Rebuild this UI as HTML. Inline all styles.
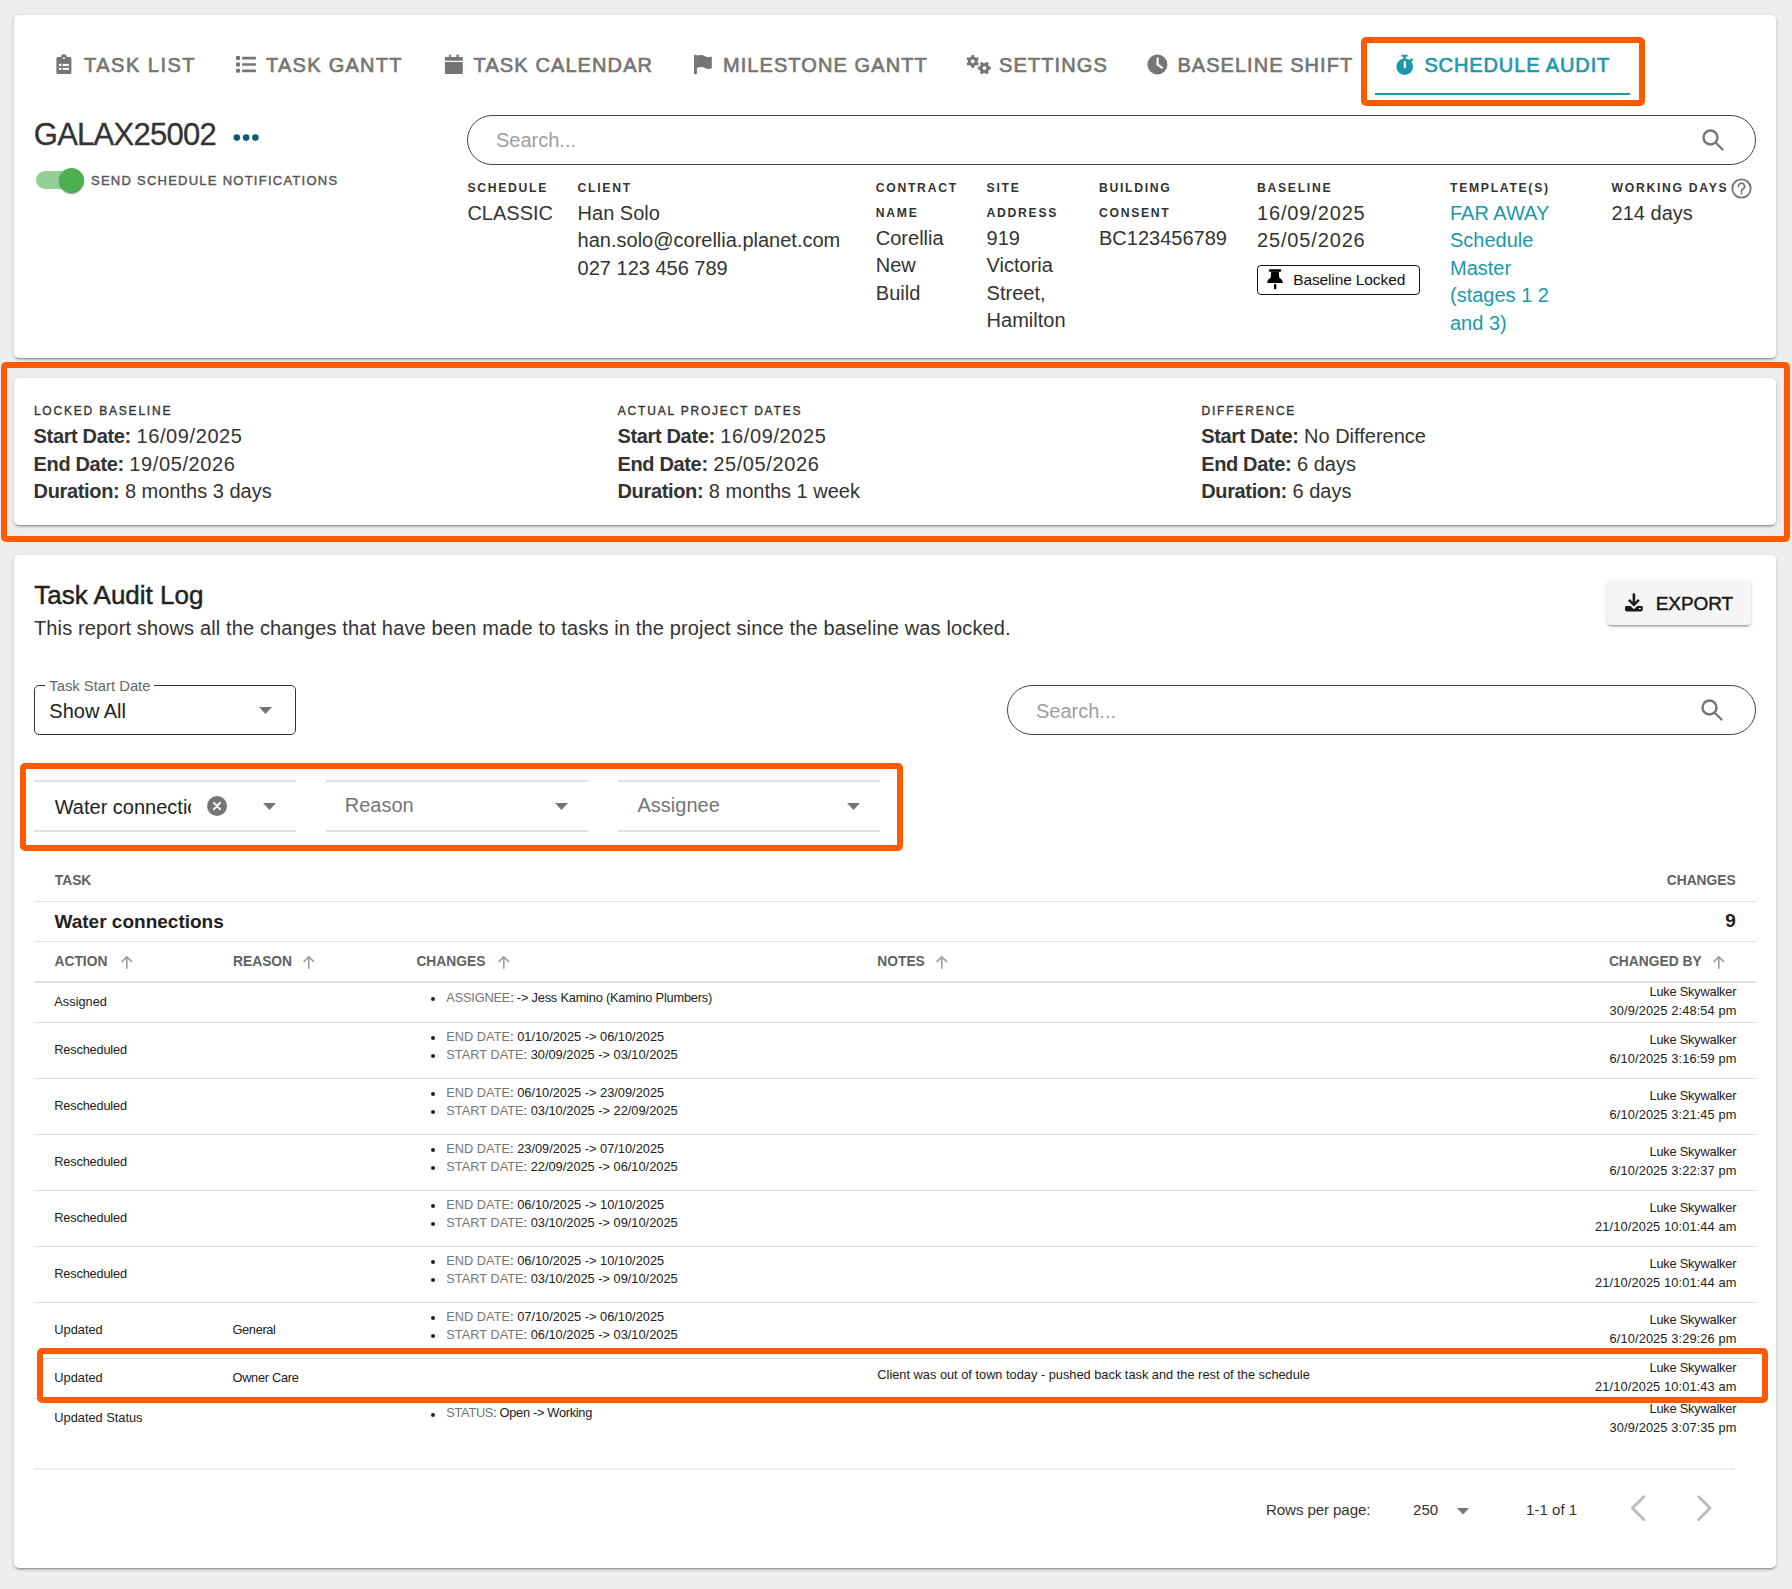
<!DOCTYPE html>
<html><head><meta charset="utf-8"><title>Schedule Audit</title>
<style>
html,body{margin:0;padding:0;}
body{width:1792px;height:1589px;background:#eeeeee;position:relative;overflow:hidden;font-family:"Liberation Sans",sans-serif;}
.t{position:absolute;white-space:nowrap;line-height:1;}
svg{display:block}
</style></head><body>
<div style="position:absolute;left:14px;top:15px;width:1762px;height:343px;background:#fff;border-radius:5px;box-shadow:0px 3px 1px -2px rgba(0,0,0,0.2),0px 2px 2px 0px rgba(0,0,0,0.14),0px 1px 5px 0px rgba(0,0,0,0.12);"></div>
<div style="position:absolute;left:14px;top:378px;width:1762px;height:147px;background:#fff;border-radius:5px;box-shadow:0px 3px 1px -2px rgba(0,0,0,0.2),0px 2px 2px 0px rgba(0,0,0,0.14),0px 1px 5px 0px rgba(0,0,0,0.12);"></div>
<div style="position:absolute;left:14px;top:555px;width:1762px;height:1013px;background:#fff;border-radius:5px;box-shadow:0px 3px 1px -2px rgba(0,0,0,0.2),0px 2px 2px 0px rgba(0,0,0,0.14),0px 1px 5px 0px rgba(0,0,0,0.12);"></div>
<div class="t" style="left:84.0px;top:55.37px;font-size:20px;font-weight:400;color:#757575;letter-spacing:1.5px;-webkit-text-stroke:0.65px #757575;">TASK LIST</div>
<div class="t" style="left:266.0px;top:55.37px;font-size:20px;font-weight:400;color:#757575;letter-spacing:1.27px;-webkit-text-stroke:0.65px #757575;">TASK GANTT</div>
<div class="t" style="left:473.59999999999997px;top:55.37px;font-size:20px;font-weight:400;color:#757575;letter-spacing:1.1px;-webkit-text-stroke:0.65px #757575;">TASK CALENDAR</div>
<div class="t" style="left:722.9px;top:55.37px;font-size:20px;font-weight:400;color:#757575;letter-spacing:1.09px;-webkit-text-stroke:0.65px #757575;">MILESTONE GANTT</div>
<div class="t" style="left:999.0px;top:55.37px;font-size:20px;font-weight:400;color:#757575;letter-spacing:1.11px;-webkit-text-stroke:0.65px #757575;">SETTINGS</div>
<div class="t" style="left:1177.4px;top:55.37px;font-size:20px;font-weight:400;color:#757575;letter-spacing:1.05px;-webkit-text-stroke:0.65px #757575;">BASELINE SHIFT</div>
<div class="t" style="left:1424.4px;top:55.37px;font-size:20px;font-weight:400;color:#1c97ad;letter-spacing:0.89px;-webkit-text-stroke:0.65px #1c97ad;">SCHEDULE AUDIT</div>
<div style="position:absolute;left:1375px;top:93px;width:255px;height:2px;background:#1c97ad;"></div>
<svg style="position:absolute;left:56px;top:54px" width="17" height="21" viewBox="0 0 17 21"><path fill="#757575" d="M1.9,3 H13.9 a1.5,1.5 0 0 1 1.5,1.5 V18.6 a1.5,1.5 0 0 1 -1.5,1.5 H1.9 a1.5,1.5 0 0 1 -1.5,-1.5 V4.5 a1.5,1.5 0 0 1 1.5,-1.5z"/><circle cx="7.9" cy="3" r="2.8" fill="#757575"/><circle cx="7.9" cy="4.3" r="1.05" fill="#fff"/><rect x="3" y="9.9" width="2.4" height="2.1" fill="#fff"/><rect x="6.7" y="9.9" width="6.2" height="2.1" fill="#fff"/><rect x="3" y="13.8" width="2.4" height="2.1" fill="#fff"/><rect x="6.7" y="13.8" width="6.2" height="2.1" fill="#fff"/></svg>
<svg style="position:absolute;left:236px;top:55px" width="21" height="19" viewBox="0 0 21 19"><g fill="#757575"><rect x="0" y="1" width="4" height="4" rx="0.8"/><rect x="0" y="7.4" width="4" height="4" rx="0.8"/><rect x="0" y="13.8" width="4" height="4" rx="0.8"/><rect x="6" y="1.8" width="14" height="2.6" rx="1"/><rect x="6" y="8.2" width="14" height="2.6" rx="1"/><rect x="6" y="14.6" width="14" height="2.6" rx="1"/></g></svg>
<svg style="position:absolute;left:444px;top:54px" width="20" height="21" viewBox="0 0 20 21"><g fill="#757575"><rect x="4.9" y="0.5" width="2" height="3" rx="0.8"/><rect x="12.5" y="0.5" width="2.3" height="3" rx="0.8"/><path d="M1.7,3 H18 a0.8,0.8 0 0 1 0.8,0.8 v3 h-17.9 v-3 a0.8,0.8 0 0 1 0.8,-0.8z"/><path d="M0.9,8 H18.8 V19.3 a0.8,0.8 0 0 1 -0.8,0.8 H1.7 a0.8,0.8 0 0 1 -0.8,-0.8z"/></g></svg>
<svg style="position:absolute;left:694px;top:54px" width="19" height="21" viewBox="0 0 19 21"><g fill="#757575"><rect x="0" y="0.8" width="2.9" height="19.4" rx="1"/><path d="M2.5,1.8 C6,0.6 8.5,1 11,2.3 C13.5,3.5 15.5,3.4 17.8,2.6 V14.2 C15.5,15.2 13.5,15.3 11,14 C8.5,12.8 6,12.5 2.5,14.2z"/></g></svg>
<svg style="position:absolute;left:962px;top:50px" width="32" height="28" viewBox="0 0 32 28"><circle cx="10.7" cy="11.4" r="5.0" fill="#757575"/><rect x="9.35" y="4.9" width="2.7" height="2.7" rx="0.4" fill="#757575" transform="rotate(0.0 10.7 11.4)"/><rect x="9.35" y="4.9" width="2.7" height="2.7" rx="0.4" fill="#757575" transform="rotate(60.0 10.7 11.4)"/><rect x="9.35" y="4.9" width="2.7" height="2.7" rx="0.4" fill="#757575" transform="rotate(120.0 10.7 11.4)"/><rect x="9.35" y="4.9" width="2.7" height="2.7" rx="0.4" fill="#757575" transform="rotate(180.0 10.7 11.4)"/><rect x="9.35" y="4.9" width="2.7" height="2.7" rx="0.4" fill="#757575" transform="rotate(240.0 10.7 11.4)"/><rect x="9.35" y="4.9" width="2.7" height="2.7" rx="0.4" fill="#757575" transform="rotate(300.0 10.7 11.4)"/><circle cx="10.7" cy="11.4" r="1.9" fill="#fff"/><circle cx="22.4" cy="18.1" r="5.1" fill="#757575"/><rect x="21.049999999999997" y="11.500000000000002" width="2.7" height="2.7" rx="0.4" fill="#757575" transform="rotate(30.0 22.4 18.1)"/><rect x="21.049999999999997" y="11.500000000000002" width="2.7" height="2.7" rx="0.4" fill="#757575" transform="rotate(90.0 22.4 18.1)"/><rect x="21.049999999999997" y="11.500000000000002" width="2.7" height="2.7" rx="0.4" fill="#757575" transform="rotate(150.0 22.4 18.1)"/><rect x="21.049999999999997" y="11.500000000000002" width="2.7" height="2.7" rx="0.4" fill="#757575" transform="rotate(210.0 22.4 18.1)"/><rect x="21.049999999999997" y="11.500000000000002" width="2.7" height="2.7" rx="0.4" fill="#757575" transform="rotate(270.0 22.4 18.1)"/><rect x="21.049999999999997" y="11.500000000000002" width="2.7" height="2.7" rx="0.4" fill="#757575" transform="rotate(330.0 22.4 18.1)"/><circle cx="22.4" cy="18.1" r="1.9" fill="#fff"/></svg>
<svg style="position:absolute;left:1146px;top:53px" width="23" height="23" viewBox="0 0 23 23"><circle cx="11.4" cy="11.5" r="10" fill="#757575"/><path d="M11.6,5.3 V11.7 L16,14.6" stroke="#fff" stroke-width="2.1" fill="none" stroke-linecap="round" stroke-linejoin="round"/></svg>
<svg style="position:absolute;left:1395px;top:54px" width="20" height="22" viewBox="0 0 20 22"><g fill="#1c97ad"><rect x="6.4" y="0.8" width="6.4" height="2" rx="1"/><rect x="8.4" y="2" width="2.4" height="3"/><circle cx="9.7" cy="12.75" r="8.3"/><circle cx="16.6" cy="5.8" r="1.3"/><path d="M14,6.5 L16,4.4 L17.8,6.2 L15.8,8.3z"/></g><rect x="8.7" y="6.9" width="2.2" height="7.3" rx="1" fill="#fff"/></svg>
<div class="t" style="left:33.8px;top:118.75px;font-size:31px;font-weight:400;color:#333;letter-spacing:-0.75px;-webkit-text-stroke:0.3px #333;">GALAX25002</div>
<svg style="position:absolute;left:232px;top:133px" width="28" height="10" viewBox="0 0 28 10"><g fill="#125a70"><circle cx="4.8" cy="4.6" r="3.3"/><circle cx="14.1" cy="4.6" r="3.3"/><circle cx="23.4" cy="4.6" r="3.3"/></g></svg>
<div style="position:absolute;left:36px;top:171px;width:48px;height:18px;background:#93d096;border-radius:9px;"></div>
<div style="position:absolute;left:59px;top:168px;width:25px;height:25px;background:#4caf50;border-radius:50%;box-shadow:0px 2px 1px -1px rgba(0,0,0,0.2),0px 1px 1px 0px rgba(0,0,0,0.14),0px 1px 3px 0px rgba(0,0,0,0.12);"></div>
<div class="t" style="left:91px;top:174.19px;font-size:13px;font-weight:400;color:#555;letter-spacing:1.25px;-webkit-text-stroke:0.4px #555;">SEND SCHEDULE NOTIFICATIONS</div>
<div style="position:absolute;left:467px;top:115px;width:1287px;height:48px;border:1px solid #444;border-radius:25px;"></div>
<div class="t" style="left:496px;top:130.27px;font-size:20px;font-weight:400;color:#9e9e9e;">Search...</div>
<svg style="position:absolute;left:1701px;top:128.3px" width="25" height="25" viewBox="0 0 25 25"><circle cx="9.5" cy="9.5" r="7" stroke="#757575" stroke-width="2.4" fill="none"/><path d="M14.5,14.5 L21.5,21.5" stroke="#757575" stroke-width="2.3" stroke-linecap="round"/></svg>
<div class="t" style="left:467.4px;top:181.67px;font-size:12.2px;font-weight:700;color:#333;letter-spacing:1.7px;">SCHEDULE</div>
<div class="t" style="left:467.4px;top:202.77px;font-size:20px;font-weight:400;color:#333;">CLASSIC</div>
<div class="t" style="left:577.6px;top:181.67px;font-size:12.2px;font-weight:700;color:#333;letter-spacing:1.7px;">CLIENT</div>
<div class="t" style="left:577.6px;top:202.77px;font-size:20px;font-weight:400;color:#333;">Han Solo</div>
<div class="t" style="left:577.6px;top:230.27px;font-size:20px;font-weight:400;color:#333;">han.solo@corellia.planet.com</div>
<div class="t" style="left:577.6px;top:257.77px;font-size:20px;font-weight:400;color:#333;">027 123 456 789</div>
<div class="t" style="left:875.8px;top:181.67px;font-size:12.2px;font-weight:700;color:#333;letter-spacing:1.7px;">CONTRACT</div>
<div class="t" style="left:875.8px;top:206.87px;font-size:12.2px;font-weight:700;color:#333;letter-spacing:1.7px;">NAME</div>
<div class="t" style="left:875.8px;top:227.77px;font-size:20px;font-weight:400;color:#333;">Corellia</div>
<div class="t" style="left:875.8px;top:255.27px;font-size:20px;font-weight:400;color:#333;">New</div>
<div class="t" style="left:875.8px;top:282.77px;font-size:20px;font-weight:400;color:#333;">Build</div>
<div class="t" style="left:986.6px;top:181.67px;font-size:12.2px;font-weight:700;color:#333;letter-spacing:1.7px;">SITE</div>
<div class="t" style="left:986.6px;top:206.87px;font-size:12.2px;font-weight:700;color:#333;letter-spacing:1.7px;">ADDRESS</div>
<div class="t" style="left:986.6px;top:227.77px;font-size:20px;font-weight:400;color:#333;">919</div>
<div class="t" style="left:986.6px;top:255.27px;font-size:20px;font-weight:400;color:#333;">Victoria</div>
<div class="t" style="left:986.6px;top:282.77px;font-size:20px;font-weight:400;color:#333;">Street,</div>
<div class="t" style="left:986.6px;top:310.27px;font-size:20px;font-weight:400;color:#333;">Hamilton</div>
<div class="t" style="left:1099px;top:181.67px;font-size:12.2px;font-weight:700;color:#333;letter-spacing:1.7px;">BUILDING</div>
<div class="t" style="left:1099px;top:206.87px;font-size:12.2px;font-weight:700;color:#333;letter-spacing:1.7px;">CONSENT</div>
<div class="t" style="left:1099px;top:227.77px;font-size:20px;font-weight:400;color:#333;">BC123456789</div>
<div class="t" style="left:1257px;top:181.67px;font-size:12.2px;font-weight:700;color:#333;letter-spacing:1.7px;">BASELINE</div>
<div class="t" style="left:1257px;top:202.97px;font-size:20px;font-weight:400;color:#333;letter-spacing:0.85px;">16/09/2025</div>
<div class="t" style="left:1257px;top:230.47px;font-size:20px;font-weight:400;color:#333;letter-spacing:0.85px;">25/05/2026</div>
<div class="t" style="left:1450px;top:181.67px;font-size:12.2px;font-weight:700;color:#333;letter-spacing:1.7px;">TEMPLATE(S)</div>
<div class="t" style="left:1450px;top:202.77px;font-size:20px;font-weight:400;color:#1c97ad;">FAR AWAY</div>
<div class="t" style="left:1450px;top:230.27px;font-size:20px;font-weight:400;color:#1c97ad;">Schedule</div>
<div class="t" style="left:1450px;top:257.77px;font-size:20px;font-weight:400;color:#1c97ad;">Master</div>
<div class="t" style="left:1450px;top:285.27px;font-size:20px;font-weight:400;color:#1c97ad;">(stages 1 2</div>
<div class="t" style="left:1450px;top:312.77px;font-size:20px;font-weight:400;color:#1c97ad;">and 3)</div>
<div class="t" style="left:1611.6px;top:181.67px;font-size:12.2px;font-weight:700;color:#333;letter-spacing:1.7px;">WORKING DAYS</div>
<div class="t" style="left:1611.6px;top:202.77px;font-size:20px;font-weight:400;color:#333;">214 days</div>
<svg style="position:absolute;left:1731px;top:178px" width="21" height="21" viewBox="0 0 21 21"><circle cx="10.5" cy="10.5" r="9.2" stroke="#757575" stroke-width="1.8" fill="none"/><path d="M7.4,8.3 a3.1,3.1 0 1 1 4.6,2.7 c-1,0.55 -1.5,1.1 -1.5,2.1 v0.5" stroke="#757575" stroke-width="1.7" fill="none" stroke-linecap="round"/><circle cx="10.5" cy="15.6" r="1.05" fill="#757575"/></svg>
<div style="position:absolute;left:1257px;top:265px;width:161px;height:28px;border:1.3px solid #111;border-radius:4px;"></div>
<svg style="position:absolute;left:1266px;top:268px" width="18" height="23" viewBox="0 0 18 23"><g fill="#000"><rect x="2.8" y="1.2" width="12.4" height="2.5" rx="1.2"/><path d="M5.2,3.5 H12.8 L13.2,9.5 C15.5,11 16.5,12.5 16.8,14.2 Q17,15 16.2,15 H1.8 Q1,15 1.2,14.2 C1.5,12.5 2.5,11 4.8,9.5z"/><rect x="8" y="16" width="2.4" height="5.2" rx="1"/></g></svg>
<div class="t" style="left:1293.2px;top:271.88px;font-size:15.5px;font-weight:400;color:#111;letter-spacing:-0.12px;">Baseline Locked</div>
<div class="t" style="left:33.9px;top:404.74px;font-size:12px;font-weight:400;color:#333;letter-spacing:1.8px;-webkit-text-stroke:0.35px #333;">LOCKED BASELINE</div>
<div class="t" style="left:33.6px;top:426.37px;font-size:20px;font-weight:400;color:#333;"><b style="font-weight:700;letter-spacing:-0.35px">Start Date:</b> <span style="letter-spacing:0.6px">16/09/2025</span></div>
<div class="t" style="left:33.6px;top:453.72px;font-size:20px;font-weight:400;color:#333;"><b style="font-weight:700;letter-spacing:-0.35px">End Date:</b> <span style="letter-spacing:0.6px">19/05/2026</span></div>
<div class="t" style="left:33.6px;top:481.07px;font-size:20px;font-weight:400;color:#333;"><b style="font-weight:700;letter-spacing:-0.35px">Duration:</b> <span style="letter-spacing:0px">8 months 3 days</span></div>
<div class="t" style="left:617.8px;top:404.74px;font-size:12px;font-weight:400;color:#333;letter-spacing:1.8px;-webkit-text-stroke:0.35px #333;">ACTUAL PROJECT DATES</div>
<div class="t" style="left:617.5px;top:426.37px;font-size:20px;font-weight:400;color:#333;"><b style="font-weight:700;letter-spacing:-0.35px">Start Date:</b> <span style="letter-spacing:0.6px">16/09/2025</span></div>
<div class="t" style="left:617.5px;top:453.72px;font-size:20px;font-weight:400;color:#333;"><b style="font-weight:700;letter-spacing:-0.35px">End Date:</b> <span style="letter-spacing:0.6px">25/05/2026</span></div>
<div class="t" style="left:617.5px;top:481.07px;font-size:20px;font-weight:400;color:#333;"><b style="font-weight:700;letter-spacing:-0.35px">Duration:</b> <span style="letter-spacing:0px">8 months 1 week</span></div>
<div class="t" style="left:1201.5px;top:404.74px;font-size:12px;font-weight:400;color:#333;letter-spacing:1.8px;-webkit-text-stroke:0.35px #333;">DIFFERENCE</div>
<div class="t" style="left:1201.2px;top:426.37px;font-size:20px;font-weight:400;color:#333;"><b style="font-weight:700;letter-spacing:-0.35px">Start Date:</b> <span style="letter-spacing:0px">No Difference</span></div>
<div class="t" style="left:1201.2px;top:453.72px;font-size:20px;font-weight:400;color:#333;"><b style="font-weight:700;letter-spacing:-0.35px">End Date:</b> <span style="letter-spacing:0px">6 days</span></div>
<div class="t" style="left:1201.2px;top:481.07px;font-size:20px;font-weight:400;color:#333;"><b style="font-weight:700;letter-spacing:-0.35px">Duration:</b> <span style="letter-spacing:0px">6 days</span></div>
<div class="t" style="left:34.3px;top:581.99px;font-size:26px;font-weight:400;color:#222;-webkit-text-stroke:0.45px #222;">Task Audit Log</div>
<div class="t" style="left:34px;top:617.57px;font-size:20px;font-weight:400;color:#333;letter-spacing:0.14px;">This report shows all the changes that have been made to tasks in the project since the baseline was locked.</div>
<div style="position:absolute;left:1607px;top:581px;width:144px;height:44px;background:#f5f5f5;border-radius:4px;box-shadow:0px 3px 1px -2px rgba(0,0,0,0.2),0px 2px 2px 0px rgba(0,0,0,0.14),0px 1px 5px 0px rgba(0,0,0,0.12);"></div>
<svg style="position:absolute;left:1622px;top:590px" width="24" height="24" viewBox="0 0 24 24"><g fill="#1a1a1a"><rect x="10.6" y="3.2" width="2.6" height="12" rx="1.2"/><path d="M6,10.8 L7.8,9 L11.9,13.2 L16,9 L17.8,10.8 L11.9,16.6z"/><path d="M3,17.2 a1.2,1.2 0 0 1 1.2,-1.2 H8.5 L11.9,19.2 L15.3,16 H19.6 a1.2,1.2 0 0 1 1.2,1.2 V19.6 a1.8,1.8 0 0 1 -1.8,1.8 H4.8 a1.8,1.8 0 0 1 -1.8,-1.8z"/></g><rect x="16.8" y="18" width="2" height="1.2" fill="#f5f5f5"/></svg>
<div class="t" style="left:1655.8px;top:594.21px;font-size:19px;font-weight:400;color:#1a1a1a;letter-spacing:-0.1px;-webkit-text-stroke:0.45px #1a1a1a;">EXPORT</div>
<div style="position:absolute;left:34px;top:685px;width:260px;height:48px;border:1.3px solid #333;border-radius:5px;"></div>
<div style="position:absolute;left:45px;top:680px;width:109px;height:10px;background:#fff;"></div>
<div class="t" style="left:49.3px;top:679.27px;font-size:14.8px;font-weight:400;color:#666;">Task Start Date</div>
<div class="t" style="left:49.3px;top:701.07px;font-size:20px;font-weight:400;color:#222;">Show All</div>
<svg style="position:absolute;left:258px;top:706px" width="15" height="9" viewBox="0 0 15 9"><path d="M1,1 H14 L7.5,8z" fill="#757575"/></svg>
<div style="position:absolute;left:1007px;top:685px;width:747px;height:48px;border:1px solid #444;border-radius:25px;"></div>
<div class="t" style="left:1036px;top:700.57px;font-size:20px;font-weight:400;color:#9e9e9e;">Search...</div>
<svg style="position:absolute;left:1700px;top:698px" width="25" height="25" viewBox="0 0 25 25"><circle cx="9.5" cy="9.5" r="7" stroke="#757575" stroke-width="2.4" fill="none"/><path d="M14.5,14.5 L21.5,21.5" stroke="#757575" stroke-width="2.3" stroke-linecap="round"/></svg>
<div style="position:absolute;left:34px;top:779.5px;width:262px;height:2px;background:#e0e0e0;"></div>
<div style="position:absolute;left:34px;top:829.5px;width:262px;height:2px;background:#e0e0e0;"></div>
<svg style="position:absolute;left:262px;top:802px" width="15" height="9" viewBox="0 0 15 9"><path d="M1,1 H14 L7.5,8z" fill="#757575"/></svg>
<div style="position:absolute;left:326px;top:779.5px;width:262px;height:2px;background:#e0e0e0;"></div>
<div style="position:absolute;left:326px;top:829.5px;width:262px;height:2px;background:#e0e0e0;"></div>
<svg style="position:absolute;left:554px;top:802px" width="15" height="9" viewBox="0 0 15 9"><path d="M1,1 H14 L7.5,8z" fill="#757575"/></svg>
<div style="position:absolute;left:618px;top:779.5px;width:262px;height:2px;background:#e0e0e0;"></div>
<div style="position:absolute;left:618px;top:829.5px;width:262px;height:2px;background:#e0e0e0;"></div>
<svg style="position:absolute;left:846px;top:802px" width="15" height="9" viewBox="0 0 15 9"><path d="M1,1 H14 L7.5,8z" fill="#757575"/></svg>
<div style="position:absolute;left:54.7px;top:790px;width:136px;height:32px;overflow:hidden;">
<div class="t" style="left:0px;top:6.67px;font-size:20px;font-weight:400;color:#222;">Water connections</div>
</div>
<div class="t" style="left:344.8px;top:795.07px;font-size:20px;font-weight:400;color:#757575;">Reason</div>
<div class="t" style="left:637.5px;top:795.07px;font-size:20px;font-weight:400;color:#757575;">Assignee</div>
<svg style="position:absolute;left:206px;top:795px" width="22" height="22" viewBox="0 0 22 22"><circle cx="11" cy="11" r="10" fill="#757575"/><path d="M7.9,7.9 L14.1,14.1 M14.1,7.9 L7.9,14.1" stroke="#fff" stroke-width="2" stroke-linecap="round"/></svg>
<div class="t" style="left:54.8px;top:874.32px;font-size:13.8px;font-weight:700;color:#616161;">TASK</div>
<div class="t" style="right:56.299999999999955px;top:874.12px;font-size:13.8px;font-weight:700;color:#616161;">CHANGES</div>
<div style="position:absolute;left:34px;top:900.5px;width:1722px;height:1px;background:#e0e0e0;"></div>
<div class="t" style="left:54.5px;top:911.71px;font-size:19px;font-weight:700;color:#212121;">Water connections</div>
<div class="t" style="right:56.299999999999955px;top:911.31px;font-size:19px;font-weight:700;color:#212121;">9</div>
<div style="position:absolute;left:34px;top:941px;width:1722px;height:1px;background:#e0e0e0;"></div>
<div class="t" style="left:54.5px;top:954.82px;font-size:13.8px;font-weight:700;color:#616161;">ACTION</div>
<svg style="position:absolute;left:119.5px;top:954px" width="14" height="16" viewBox="0 0 14 16"><path d="M6.8,14.8 V3.2 M1.6,7.9 L6.8,2.9 L12,7.9" stroke="#9e9e9e" stroke-width="1.6" fill="none"/></svg>
<div class="t" style="left:233px;top:954.82px;font-size:13.8px;font-weight:700;color:#616161;">REASON</div>
<svg style="position:absolute;left:302px;top:954px" width="14" height="16" viewBox="0 0 14 16"><path d="M6.8,14.8 V3.2 M1.6,7.9 L6.8,2.9 L12,7.9" stroke="#9e9e9e" stroke-width="1.6" fill="none"/></svg>
<div class="t" style="left:416.4px;top:954.82px;font-size:13.8px;font-weight:700;color:#616161;">CHANGES</div>
<svg style="position:absolute;left:497px;top:954px" width="14" height="16" viewBox="0 0 14 16"><path d="M6.8,14.8 V3.2 M1.6,7.9 L6.8,2.9 L12,7.9" stroke="#9e9e9e" stroke-width="1.6" fill="none"/></svg>
<div class="t" style="left:877.3px;top:954.82px;font-size:13.8px;font-weight:700;color:#616161;">NOTES</div>
<svg style="position:absolute;left:935px;top:954px" width="14" height="16" viewBox="0 0 14 16"><path d="M6.8,14.8 V3.2 M1.6,7.9 L6.8,2.9 L12,7.9" stroke="#9e9e9e" stroke-width="1.6" fill="none"/></svg>
<div class="t" style="left:1608.9px;top:954.82px;font-size:13.8px;font-weight:700;color:#616161;">CHANGED BY</div>
<svg style="position:absolute;left:1712px;top:954px" width="14" height="16" viewBox="0 0 14 16"><path d="M6.8,14.8 V3.2 M1.6,7.9 L6.8,2.9 L12,7.9" stroke="#9e9e9e" stroke-width="1.6" fill="none"/></svg>
<div style="position:absolute;left:34px;top:981px;width:1722px;height:2px;background:#e0e0e0;"></div>
<div style="position:absolute;left:34px;top:1022px;width:1722px;height:1px;background:#e0e0e0;"></div>
<div style="position:absolute;left:34px;top:1078px;width:1722px;height:1px;background:#e0e0e0;"></div>
<div style="position:absolute;left:34px;top:1134px;width:1722px;height:1px;background:#e0e0e0;"></div>
<div style="position:absolute;left:34px;top:1190px;width:1722px;height:1px;background:#e0e0e0;"></div>
<div style="position:absolute;left:34px;top:1246px;width:1722px;height:1px;background:#e0e0e0;"></div>
<div style="position:absolute;left:34px;top:1302px;width:1722px;height:1px;background:#e0e0e0;"></div>
<div style="position:absolute;left:34px;top:1358px;width:1722px;height:1px;background:#e0e0e0;"></div>
<div style="position:absolute;left:34px;top:1398px;width:1722px;height:1px;background:#e0e0e0;"></div>
<div style="position:absolute;left:34px;top:1468px;width:1701px;height:2px;background:#eeeeee;"></div>
<div class="t" style="left:54.3px;top:995.86px;font-size:12.8px;font-weight:400;color:#212121;">Assigned</div>
<div style="position:absolute;left:431px;top:997.1px;width:4px;height:4px;background:#222;border-radius:50%;"></div>
<div class="t" style="left:446.3px;top:991.86px;font-size:12.8px;font-weight:400;color:#212121;letter-spacing:-0.2px;"><span style="color:#757575">ASSIGNEE</span>: -> Jess Kamino (Kamino Plumbers)</div>
<div class="t" style="right:55.700000000000045px;top:986.06px;font-size:12.8px;font-weight:400;color:#212121;letter-spacing:-0.2px;">Luke Skywalker</div>
<div class="t" style="right:55.5px;top:1005.06px;font-size:12.8px;font-weight:400;color:#212121;letter-spacing:0.12px;">30/9/2025 2:48:54 pm</div>
<div class="t" style="left:54.3px;top:1043.86px;font-size:12.8px;font-weight:400;color:#212121;letter-spacing:-0.2px;">Rescheduled</div>
<div style="position:absolute;left:431px;top:1036.1000000000001px;width:4px;height:4px;background:#222;border-radius:50%;"></div>
<div class="t" style="left:446.3px;top:1030.86px;font-size:12.8px;font-weight:400;color:#212121;"><span style="color:#757575">END DATE</span>: 01/10/2025 -> 06/10/2025</div>
<div style="position:absolute;left:431px;top:1054.1000000000001px;width:4px;height:4px;background:#222;border-radius:50%;"></div>
<div class="t" style="left:446.3px;top:1048.86px;font-size:12.8px;font-weight:400;color:#212121;"><span style="color:#757575">START DATE</span>: 30/09/2025 -> 03/10/2025</div>
<div class="t" style="right:55.700000000000045px;top:1034.06px;font-size:12.8px;font-weight:400;color:#212121;letter-spacing:-0.2px;">Luke Skywalker</div>
<div class="t" style="right:55.5px;top:1053.06px;font-size:12.8px;font-weight:400;color:#212121;letter-spacing:0.12px;">6/10/2025 3:16:59 pm</div>
<div class="t" style="left:54.3px;top:1099.86px;font-size:12.8px;font-weight:400;color:#212121;letter-spacing:-0.2px;">Rescheduled</div>
<div style="position:absolute;left:431px;top:1092.1000000000001px;width:4px;height:4px;background:#222;border-radius:50%;"></div>
<div class="t" style="left:446.3px;top:1086.86px;font-size:12.8px;font-weight:400;color:#212121;"><span style="color:#757575">END DATE</span>: 06/10/2025 -> 23/09/2025</div>
<div style="position:absolute;left:431px;top:1110.1000000000001px;width:4px;height:4px;background:#222;border-radius:50%;"></div>
<div class="t" style="left:446.3px;top:1104.86px;font-size:12.8px;font-weight:400;color:#212121;"><span style="color:#757575">START DATE</span>: 03/10/2025 -> 22/09/2025</div>
<div class="t" style="right:55.700000000000045px;top:1090.06px;font-size:12.8px;font-weight:400;color:#212121;letter-spacing:-0.2px;">Luke Skywalker</div>
<div class="t" style="right:55.5px;top:1109.06px;font-size:12.8px;font-weight:400;color:#212121;letter-spacing:0.12px;">6/10/2025 3:21:45 pm</div>
<div class="t" style="left:54.3px;top:1155.86px;font-size:12.8px;font-weight:400;color:#212121;letter-spacing:-0.2px;">Rescheduled</div>
<div style="position:absolute;left:431px;top:1148.1000000000001px;width:4px;height:4px;background:#222;border-radius:50%;"></div>
<div class="t" style="left:446.3px;top:1142.86px;font-size:12.8px;font-weight:400;color:#212121;"><span style="color:#757575">END DATE</span>: 23/09/2025 -> 07/10/2025</div>
<div style="position:absolute;left:431px;top:1166.1000000000001px;width:4px;height:4px;background:#222;border-radius:50%;"></div>
<div class="t" style="left:446.3px;top:1160.86px;font-size:12.8px;font-weight:400;color:#212121;"><span style="color:#757575">START DATE</span>: 22/09/2025 -> 06/10/2025</div>
<div class="t" style="right:55.700000000000045px;top:1146.06px;font-size:12.8px;font-weight:400;color:#212121;letter-spacing:-0.2px;">Luke Skywalker</div>
<div class="t" style="right:55.5px;top:1165.06px;font-size:12.8px;font-weight:400;color:#212121;letter-spacing:0.12px;">6/10/2025 3:22:37 pm</div>
<div class="t" style="left:54.3px;top:1211.86px;font-size:12.8px;font-weight:400;color:#212121;letter-spacing:-0.2px;">Rescheduled</div>
<div style="position:absolute;left:431px;top:1204.1000000000001px;width:4px;height:4px;background:#222;border-radius:50%;"></div>
<div class="t" style="left:446.3px;top:1198.86px;font-size:12.8px;font-weight:400;color:#212121;"><span style="color:#757575">END DATE</span>: 06/10/2025 -> 10/10/2025</div>
<div style="position:absolute;left:431px;top:1222.1000000000001px;width:4px;height:4px;background:#222;border-radius:50%;"></div>
<div class="t" style="left:446.3px;top:1216.86px;font-size:12.8px;font-weight:400;color:#212121;"><span style="color:#757575">START DATE</span>: 03/10/2025 -> 09/10/2025</div>
<div class="t" style="right:55.700000000000045px;top:1202.06px;font-size:12.8px;font-weight:400;color:#212121;letter-spacing:-0.2px;">Luke Skywalker</div>
<div class="t" style="right:55.5px;top:1221.06px;font-size:12.8px;font-weight:400;color:#212121;letter-spacing:0.12px;">21/10/2025 10:01:44 am</div>
<div class="t" style="left:54.3px;top:1267.86px;font-size:12.8px;font-weight:400;color:#212121;letter-spacing:-0.2px;">Rescheduled</div>
<div style="position:absolute;left:431px;top:1260.1000000000001px;width:4px;height:4px;background:#222;border-radius:50%;"></div>
<div class="t" style="left:446.3px;top:1254.86px;font-size:12.8px;font-weight:400;color:#212121;"><span style="color:#757575">END DATE</span>: 06/10/2025 -> 10/10/2025</div>
<div style="position:absolute;left:431px;top:1278.1000000000001px;width:4px;height:4px;background:#222;border-radius:50%;"></div>
<div class="t" style="left:446.3px;top:1272.86px;font-size:12.8px;font-weight:400;color:#212121;"><span style="color:#757575">START DATE</span>: 03/10/2025 -> 09/10/2025</div>
<div class="t" style="right:55.700000000000045px;top:1258.06px;font-size:12.8px;font-weight:400;color:#212121;letter-spacing:-0.2px;">Luke Skywalker</div>
<div class="t" style="right:55.5px;top:1277.06px;font-size:12.8px;font-weight:400;color:#212121;letter-spacing:0.12px;">21/10/2025 10:01:44 am</div>
<div class="t" style="left:54.3px;top:1323.86px;font-size:12.8px;font-weight:400;color:#212121;">Updated</div>
<div class="t" style="left:232.5px;top:1323.86px;font-size:12.8px;font-weight:400;color:#212121;letter-spacing:-0.35px;">General</div>
<div style="position:absolute;left:431px;top:1316.1000000000001px;width:4px;height:4px;background:#222;border-radius:50%;"></div>
<div class="t" style="left:446.3px;top:1310.86px;font-size:12.8px;font-weight:400;color:#212121;"><span style="color:#757575">END DATE</span>: 07/10/2025 -> 06/10/2025</div>
<div style="position:absolute;left:431px;top:1334.1000000000001px;width:4px;height:4px;background:#222;border-radius:50%;"></div>
<div class="t" style="left:446.3px;top:1328.86px;font-size:12.8px;font-weight:400;color:#212121;"><span style="color:#757575">START DATE</span>: 06/10/2025 -> 03/10/2025</div>
<div class="t" style="right:55.700000000000045px;top:1314.06px;font-size:12.8px;font-weight:400;color:#212121;letter-spacing:-0.2px;">Luke Skywalker</div>
<div class="t" style="right:55.5px;top:1333.06px;font-size:12.8px;font-weight:400;color:#212121;letter-spacing:0.12px;">6/10/2025 3:29:26 pm</div>
<div class="t" style="left:54.3px;top:1372.16px;font-size:12.8px;font-weight:400;color:#212121;">Updated</div>
<div class="t" style="left:232.5px;top:1372.16px;font-size:12.8px;font-weight:400;color:#212121;letter-spacing:-0.3px;">Owner Care</div>
<div class="t" style="left:877.3px;top:1369.16px;font-size:12.8px;font-weight:400;color:#212121;">Client was out of town today - pushed back task and the rest of the schedule</div>
<div class="t" style="right:55.700000000000045px;top:1362.06px;font-size:12.8px;font-weight:400;color:#212121;letter-spacing:-0.2px;">Luke Skywalker</div>
<div class="t" style="right:55.5px;top:1381.06px;font-size:12.8px;font-weight:400;color:#212121;letter-spacing:0.12px;">21/10/2025 10:01:43 am</div>
<div class="t" style="left:54.3px;top:1412.16px;font-size:12.8px;font-weight:400;color:#212121;">Updated Status</div>
<div style="position:absolute;left:431px;top:1412.5px;width:4px;height:4px;background:#222;border-radius:50%;"></div>
<div class="t" style="left:446.3px;top:1407.16px;font-size:12.8px;font-weight:400;color:#212121;letter-spacing:-0.3px;"><span style="color:#757575">STATUS</span>: Open -> Working</div>
<div class="t" style="right:55.700000000000045px;top:1403.06px;font-size:12.8px;font-weight:400;color:#212121;letter-spacing:-0.2px;">Luke Skywalker</div>
<div class="t" style="right:55.5px;top:1421.56px;font-size:12.8px;font-weight:400;color:#212121;letter-spacing:0.12px;">30/9/2025 3:07:35 pm</div>
<div class="t" style="left:1266px;top:1502.01px;font-size:15.1px;font-weight:400;color:#333;letter-spacing:-0.1px;">Rows per page:</div>
<div class="t" style="left:1413px;top:1502.01px;font-size:15.1px;font-weight:400;color:#333;">250</div>
<svg style="position:absolute;left:1456px;top:1506.5px" width="14" height="9" viewBox="0 0 14 9"><path d="M1,1 H13 L7,7.5z" fill="#757575"/></svg>
<div class="t" style="left:1526px;top:1502.01px;font-size:15.1px;font-weight:400;color:#333;">1-1 of 1</div>
<svg style="position:absolute;left:1626px;top:1493px" width="24" height="32" viewBox="0 0 24 32"><path d="M17.8,3.7 L6.4,15.1 L17.8,26.5" stroke="#bdbdbd" stroke-width="2.9" fill="none" stroke-linecap="round" stroke-linejoin="round"/></svg>
<svg style="position:absolute;left:1692px;top:1493px" width="24" height="32" viewBox="0 0 24 32"><path d="M6.7,3.7 L18.1,15.1 L6.7,26.5" stroke="#bdbdbd" stroke-width="2.9" fill="none" stroke-linecap="round" stroke-linejoin="round"/></svg>
<div style="position:absolute;left:1px;top:362px;width:1777px;height:168px;border:6px solid #ff5a00;border-radius:5px;"></div>
<div style="position:absolute;left:1361px;top:37px;width:272px;height:57px;border:6px solid #ff5a00;border-radius:5px;"></div>
<div style="position:absolute;left:20px;top:763px;width:871px;height:76px;border:6px solid #ff5a00;border-radius:5px;"></div>
<div style="position:absolute;left:37px;top:1348px;width:1719px;height:43px;border:6px solid #ff5a00;border-radius:5px;"></div>
</body></html>
